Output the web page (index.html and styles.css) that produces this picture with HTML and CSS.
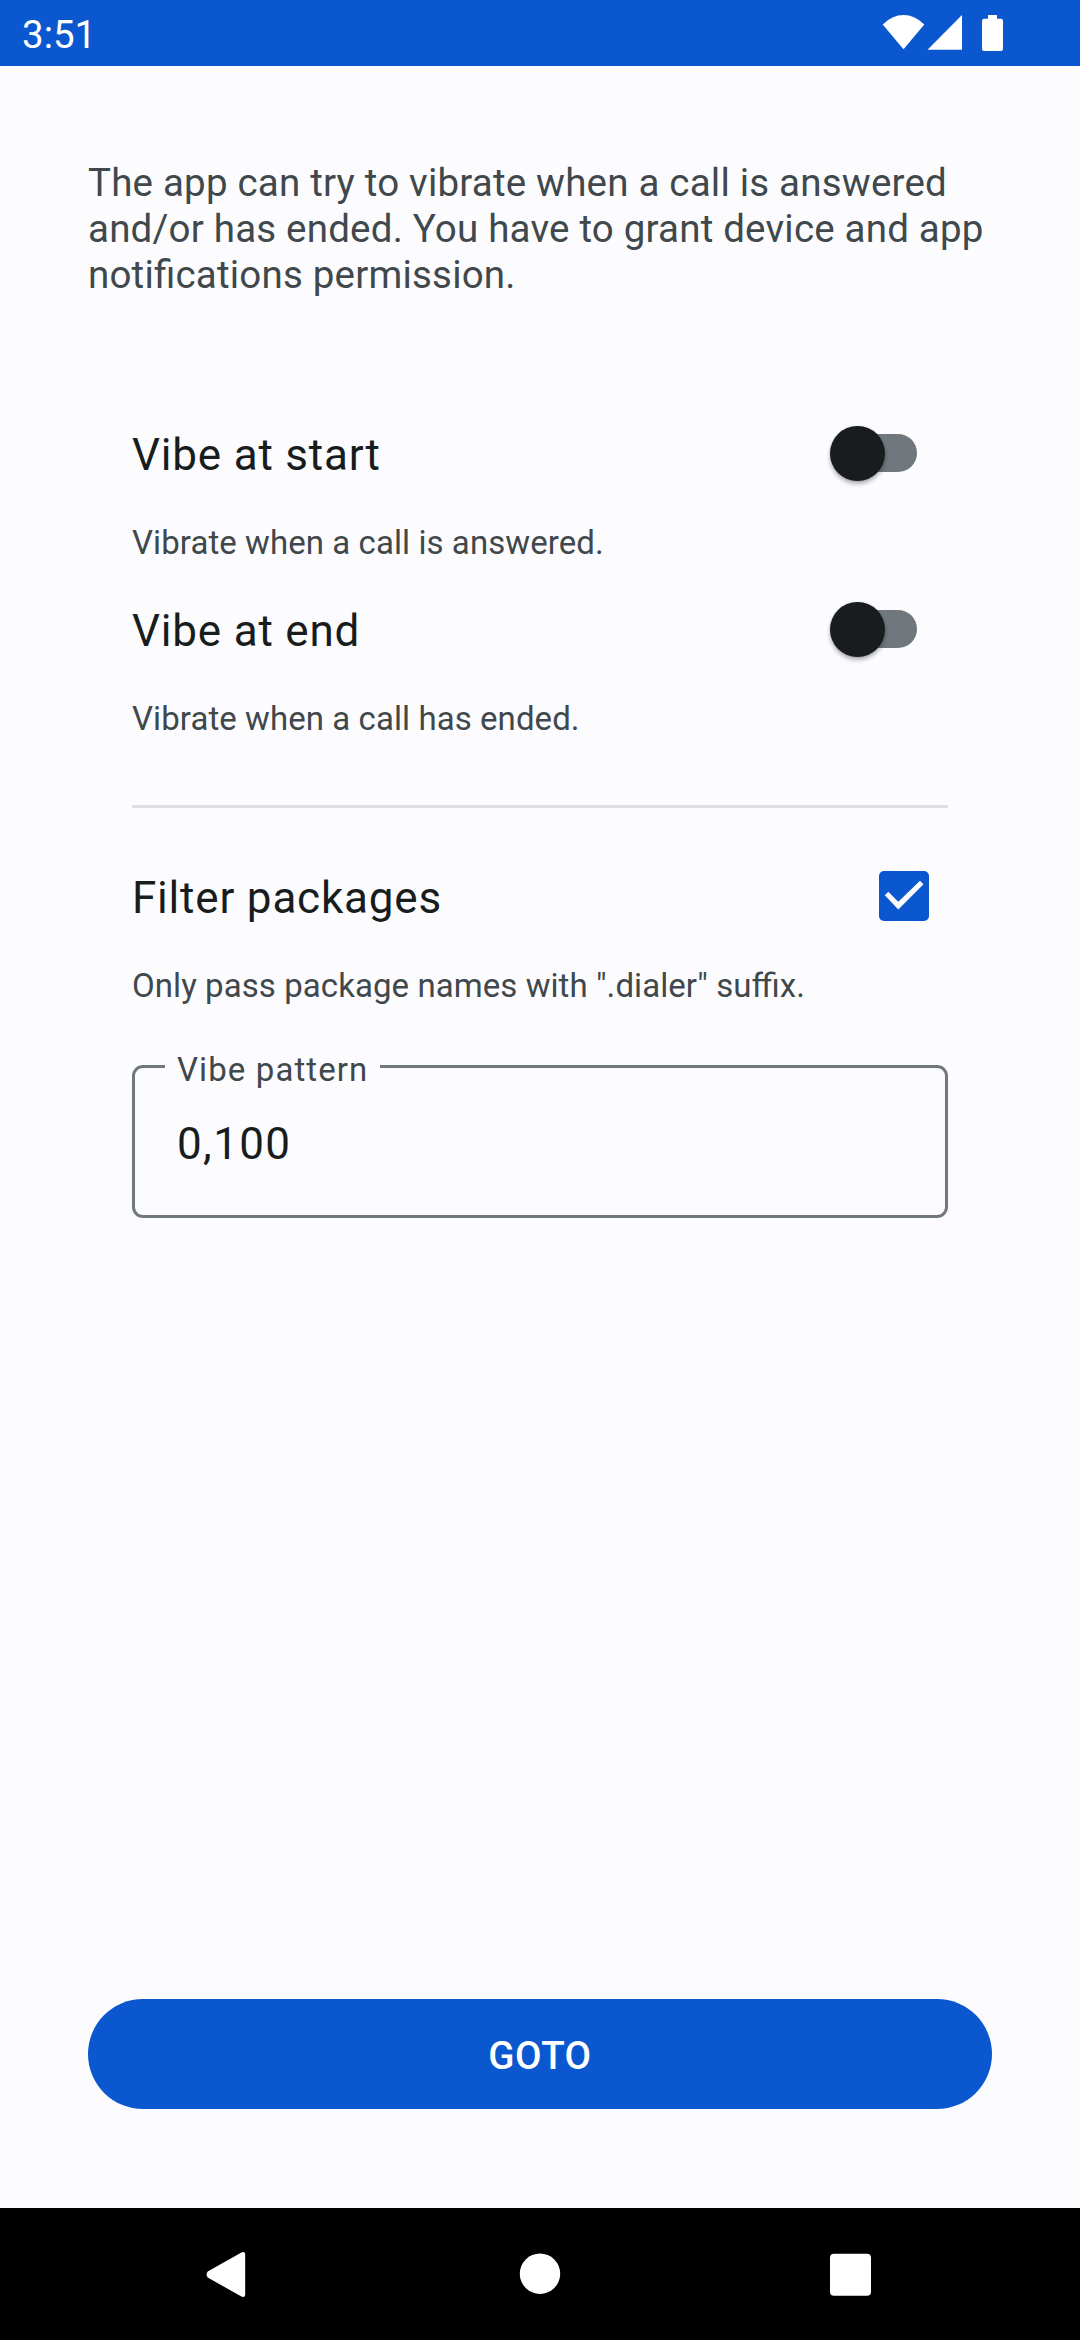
FILE: index.html
```html
<!DOCTYPE html>
<html lang="en">
<head>
<meta charset="utf-8">
<title>Vibration settings</title>
<link rel="stylesheet" href="styles.css">
</head>
<body>
<div class="screen">
  <header class="status">
    <span class="clock">3:51</span>
    <svg class="status-icons" width="122" height="66" viewBox="882 0 122 66" fill="#fff">
      <path d="M882.7 24.5Q892 15 903.5 15T924.3 24.5L903.5 49.3Z"/>
      <path d="M927.5 49.7L962 15V49.7Z"/>
      <path d="M988 15h9v3.800h4a2 2 0 0 1 2 2V49a2 2 0 0 1-2 2H984a2 2 0 0 1-2-2V20.800a2 2 0 0 1 2-2h4Z"/>
    </svg>
  </header>
  <main class="content">
    <p class="intro">The app can try to vibrate when a call is answered and/or has ended. You have to grant device and app notifications permission.</p>
    <section class="settings">
      <div class="row"><span class="title">Vibe at start</span><span class="switch"><span class="thumb"></span></span></div>
      <p class="desc">Vibrate when a call is answered.</p>
      <div class="row"><span class="title">Vibe at end</span><span class="switch"><span class="thumb"></span></span></div>
      <p class="desc">Vibrate when a call has ended.</p>
      <hr class="divider">
      <div class="row"><span class="title">Filter packages</span>
        <svg class="check" width="50" height="50" viewBox="0 0 50 50"><rect width="50" height="50" rx="5" fill="#0b57d0"/><path d="M5.800 24.200l3.500-3.500 10 10L41 9.700l3.500 3.500L19.300 38.500Z" fill="#fcfcff"/></svg>
      </div>
      <p class="desc">Only pass package names with ".dialer" suffix.</p>
      <div class="field"><span class="label">Vibe pattern</span><span class="value">0,100</span></div>
    </section>
    <button class="goto">GOTO</button>
  </main>
  <nav class="navbar">
    <svg class="nav-icons" width="1080" height="132" viewBox="0 0 1080 132" fill="#fff">
      <path d="M207.700 63.500L240.500 45Q245.200 42.500 245.200 47V86Q245.200 90.500 240.500 88L207.700 69.500Q205.500 66.500 207.700 63.500Z"/>
      <circle cx="540" cy="65.700" r="20.200"/>
      <rect x="830" y="45.700" width="41" height="42" rx="4"/>
    </svg>
  </nav>
</div>
</body>
</html>
```
FILE: styles.css
```css
* { box-sizing: border-box; }
body { margin: 0; font-family: Roboto, sans-serif; background: #fcfcff; }
p { margin: 0; }
.screen { width: 1080px; height: 2340px; display: flex; flex-direction: column; }
.status { height: 66px; background: #0b57d0; display: flex; justify-content: space-between; align-items: center; padding: 0 76px 0 22px; }
.clock { color: #fff; font-size: 38.5px; line-height: 46px; padding-top: 3px; }
.status-icons { display: block; }
.content { flex: 1; display: flex; flex-direction: column; padding: 94px 88px 99px; }
.intro { font-size: 38.5px; line-height: 46px; letter-spacing: 0.2px; color: #40484c; font-feature-settings: "liga" 1; }
.settings { display: flex; flex-direction: column; padding: 89px 44px 0; }
.row { height: 132px; display: flex; justify-content: space-between; align-items: center; }
.title { font-size: 44px; line-height: 52px; letter-spacing: 0.8px; color: #191c1d; padding-top: 4px; }
.desc { height: 44px; font-size: 33px; line-height: 48px; letter-spacing: 0.07px; color: #40484c; font-feature-settings: "liga" 1; }
.switch { width: 82px; height: 38px; margin-right: 31px; border-radius: 19px; background: #70787d; display: flex; align-items: center; }
.thumb { width: 55px; height: 55px; flex: none; margin-left: -5px; border-radius: 50%; background: #191c1d; box-shadow: 0 3px 4px rgba(0,0,0,.3), 0 0 2px rgba(0,0,0,.15); }
.divider { width: 100%; height: 3px; margin: 66px 0 22px; border: 0; background: #dddfe0; }
.check { margin-right: 19px; }
.field { position: relative; height: 153px; margin-top: 59px; border: 3px solid #70787d; border-radius: 11px; display: flex; align-items: center; padding: 5px 42px 0; }
.label { position: absolute; left: 30px; top: -18px; padding: 0 12px; background: #fcfcff; font-size: 33px; line-height: 40px; letter-spacing: 1.1px; color: #40484c; }
.value { font-size: 44px; line-height: 52px; letter-spacing: 1.375px; color: #191c1d; }
.goto { margin-top: auto; height: 110px; border: 0; border-radius: 55px; background: #0b57d0; color: #fff; font: 500 38.5px/46px Roboto, sans-serif; letter-spacing: .5px; padding: 3px 0 0; }
.navbar { height: 132px; background: #000; }
.nav-icons { display: block; }
```
